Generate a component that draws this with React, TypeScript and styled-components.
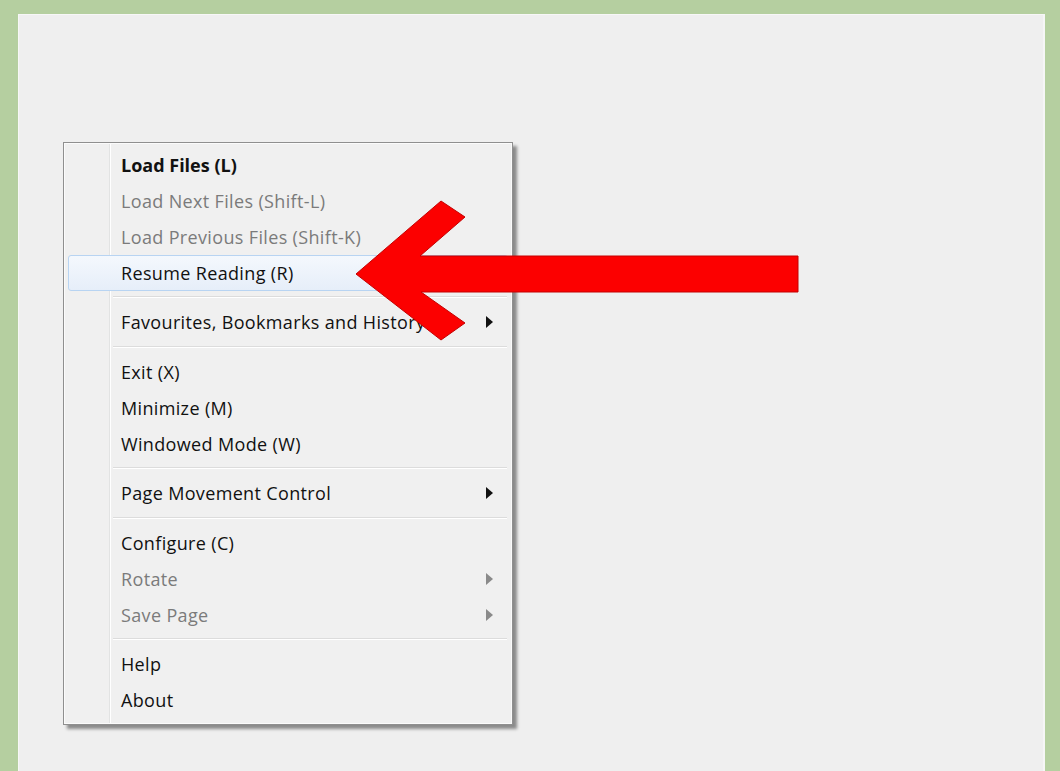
import React from "react";
import styled, { createGlobalStyle, css } from "styled-components";

const Global = createGlobalStyle`
  html, body { margin: 0; padding: 0; }
  body {
    background: #b5cfa0;
    width: 1060px;
    height: 771px;
    overflow: hidden;
    font-family: "Open Sans", "Noto Sans", sans-serif;
  }
`;

const Frame = styled.div`
  padding: 14px 15px 0 18px;
  height: 771px;
  box-sizing: border-box;
`;

const Panel = styled.div`
  position: relative;
  height: 100%;
  background: #efefef;
  border-left: 1px solid #f7f7f7;
  border-top: 1px solid #f7f7f7;
  border-right: 2px solid #f6f6f6;
  box-sizing: border-box;
  padding: 127px 0 0 44px;
`;

const Menu = styled.div`
  width: 450px;
  box-sizing: border-box;
  border: 1px solid #8f8f8f;
  background-color: #f0f0f0;
  background-image: linear-gradient(
    to right,
    transparent 45px,
    #e2e3e3 45px,
    #e2e3e3 46px,
    #ffffff 46px,
    #ffffff 47px,
    transparent 47px
  );
  box-shadow: inset 0 0 0 1px #fbfbfb, 4px 4px 3px rgba(0, 0, 0, 0.42);
  padding: 3.5px 3px 5.5px 3px;
`;

const Item = styled.div<{ $disabled?: boolean; $bold?: boolean; $active?: boolean }>`
  height: 36px;
  box-sizing: border-box;
  display: flex;
  align-items: center;
  padding: 0 14px 0 52px;
  font-size: 18px;
  letter-spacing: ${(p) => (p.$bold ? "0px" : "0.35px")};
  color: ${(p) => (p.$disabled ? "#7b7b7b" : "#111")};
  font-weight: ${(p) => (p.$bold ? 700 : 400)};
  border: 1px solid transparent;
  border-radius: 3px;
  margin: 0 1px;
  ${(p) =>
    p.$active &&
    css`
      border-color: #b8d4f2;
      background: linear-gradient(to bottom, #f4f8fd, #e6eef9);
    `}
`;

const Label = styled.span`
  flex: 1;
  white-space: nowrap;
`;

const SubArrow = styled.span<{ $disabled?: boolean }>`
  width: 0;
  height: 0;
  border-top: 6px solid transparent;
  border-bottom: 6px solid transparent;
  border-left: 7px solid ${(p) => (p.$disabled ? "#8a8a8a" : "#111")};
`;

const Separator = styled.div`
  height: 13.5px;
  margin-left: 46px;
  margin-right: 2px;
  display: flex;
  flex-direction: column;
  justify-content: center;
  &::before {
    content: "";
    display: block;
    height: 1px;
    background: #dcdcdc;
  }
  &::after {
    content: "";
    display: block;
    height: 1px;
    background: #ffffff;
  }
`;

const Pointer = styled.svg`
  position: absolute;
  left: 321px;
  top: 175px;
  overflow: visible;
`;

type Entry =
  | { sep: true }
  | { label: string; disabled?: boolean; bold?: boolean; sub?: boolean; active?: boolean };

const entries: Entry[] = [
  { label: "Load Files (L)", bold: true },
  { label: "Load Next Files (Shift-L)", disabled: true },
  { label: "Load Previous Files (Shift-K)", disabled: true },
  { label: "Resume Reading (R)", active: true },
  { sep: true },
  { label: "Favourites, Bookmarks and History", sub: true },
  { sep: true },
  { label: "Exit (X)" },
  { label: "Minimize (M)" },
  { label: "Windowed Mode (W)" },
  { sep: true },
  { label: "Page Movement Control", sub: true },
  { sep: true },
  { label: "Configure (C)" },
  { label: "Rotate", disabled: true, sub: true },
  { label: "Save Page", disabled: true, sub: true },
  { sep: true },
  { label: "Help" },
  { label: "About" },
];

// Red callout arrow, drawn in panel-local coordinates offset by (339, 189)
const arrowPoints = [
  [355, 273],
  [440, 200],
  [464, 216],
  [419, 255],
  [797, 255],
  [797, 291],
  [420, 291],
  [464, 322],
  [440, 339],
]
  .map(([x, y]) => `${x - 339},${y - 189}`)
  .join(" ");

export default function App() {
  return (
    <>
      <Global />
      <Frame>
        <Panel>
          <Menu>
            {entries.map((e, i) =>
              "sep" in e ? (
                <Separator key={i} />
              ) : (
                <Item key={i} $disabled={e.disabled} $bold={e.bold} $active={e.active}>
                  <Label>{e.label}</Label>
                  {e.sub && <SubArrow $disabled={e.disabled} />}
                </Item>
              )
            )}
          </Menu>
          <Pointer width="470" height="160" viewBox="0 0 470 160">
            <polygon points={arrowPoints} fill="#fc0000" stroke="#c40000" strokeWidth="1" strokeLinejoin="miter" />
          </Pointer>
        </Panel>
      </Frame>
    </>
  );
}
